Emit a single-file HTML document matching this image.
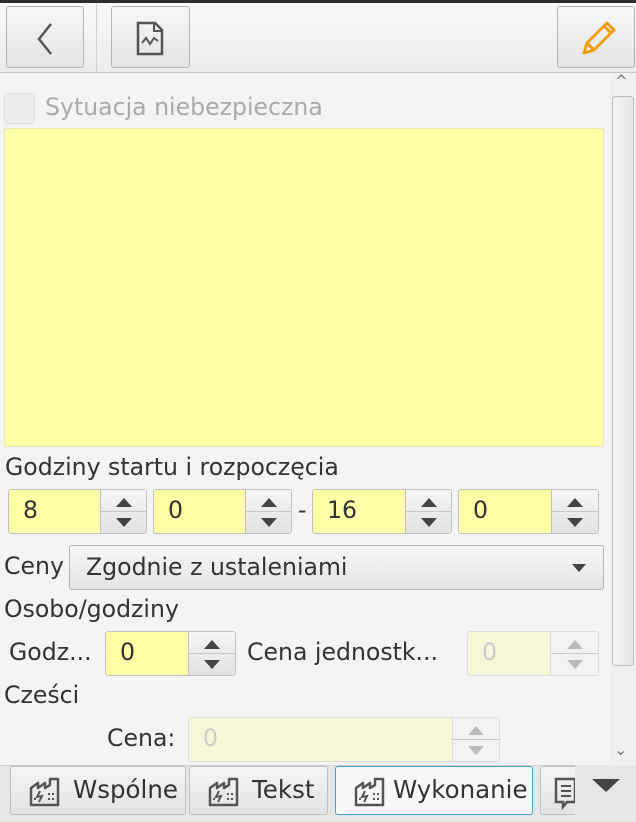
<!DOCTYPE html>
<html><head><meta charset="utf-8"><style>
*{box-sizing:border-box;margin:0;padding:0}
body{width:636px;height:822px;overflow:hidden;background:#f4f4f4;font-family:"DejaVu Sans","Liberation Sans",sans-serif;font-size:23.6px;color:#333;position:relative}
.a{position:absolute}
.btn{position:absolute;border:1px solid #b5b5b5;border-radius:3px;background:linear-gradient(#f7f7f7,#e4e4e4)}
.txt{position:absolute;white-space:nowrap;line-height:1}
.spin{position:absolute;height:45px;border:1px solid #c2c2c2;border-radius:3px;background:#ffffa8;overflow:hidden}
.spin .b{position:absolute;right:0;top:0;bottom:0;background:linear-gradient(#f6f6f6,#e2e2e2);border-left:1px solid #c2c2c2}
.spin .b:after{content:"";position:absolute;left:0;right:0;top:21px;border-top:1px solid #c8c8c8}
.up,.dn{position:absolute;left:50%;margin-left:-8px;width:0;height:0;border-left:8px solid transparent;border-right:8px solid transparent}
.up{top:8px;border-bottom:9px solid #444}
.dn{top:28px;border-top:9px solid #444}
.spin .v{position:absolute;left:14px;top:9px;line-height:1}
.dis{background:#f7f7d8;border-color:#ddd}
.dis .b{background:#f2f2f2;border-color:#ddd}
.dis .up{border-bottom-color:#bbb}.dis .dn{border-top-color:#bbb}
.dis .v{color:#ccc}
.tab{position:absolute;top:766px;height:49px;border:1px solid #c0c0c0;border-radius:3px;background:linear-gradient(#f5f5f5,#e3e3e3)}
.tab .t{position:absolute;left:62px;top:11px;font-size:24.5px;line-height:1}
.tab svg{position:absolute;left:17px;top:9px}
</style></head><body>
<div class="a" style="left:0;top:0;width:636px;height:3px;background:#2d2d2d"></div>
<div class="a" style="left:0;top:3px;width:636px;height:70px;background:linear-gradient(#f8f8f8,#ececec);border-bottom:1px solid #c8c8c8"></div>
<div class="a" style="left:96px;top:3px;width:1px;height:70px;background:#d0d0d0"></div>
<div class="btn" style="left:6px;top:6px;width:78px;height:62px"><svg class="a" style="left:24px;top:14px" width="30" height="36"><path d="M20 3 L8 18 L20 33" fill="none" stroke="#555" stroke-width="2.5"/></svg></div>
<div class="btn" style="left:111px;top:6px;width:79px;height:62px"><svg class="a" style="left:23px;top:14px" width="36" height="36"><path d="M3 2 H20 L27 9 V33 H3 Z" fill="none" stroke="#555" stroke-width="2.5"/><path d="M19 2 V10 H27" fill="none" stroke="#555" stroke-width="2"/><path d="M7 22 L11 17 L15 23 L19 17 L23 20" fill="none" stroke="#555" stroke-width="2"/></svg></div>
<div class="btn" style="left:557px;top:6px;width:78px;height:62px"><svg class="a" style="left:20px;top:12px" width="40" height="40"><path d="M6 34 L9 24 L29 4 L36 11 L16 31 Z M9 24 L16 31 M26 7 L33 14" fill="none" stroke="#f39c12" stroke-width="3" stroke-linejoin="round"/></svg></div>

<div class="a" style="left:610px;top:74px;width:26px;height:692px;background:#f0f0f0"></div>
<div class="txt" style="left:615px;top:74px;font-size:15px;color:#777">^</div>
<div class="a" style="left:612px;top:96px;width:22px;height:570px;border:1px solid #bbb;border-radius:4px;background:linear-gradient(90deg,#f4f4f4,#e6e6e6)"></div>
<div class="txt" style="left:614px;top:742px;font-size:16px;color:#777">&#8964;</div>

<div class="a" style="left:4px;top:93px;width:31px;height:31px;border:1px solid #ddd;border-radius:3px;background:#ececec"></div>
<div class="txt" style="left:45px;top:96px;color:#aaa">Sytuacja niebezpieczna</div>
<div class="a" style="left:4px;top:128px;width:600px;height:319px;background:#ffffa8;border:1px solid #e8e8c0"></div>

<div class="txt" style="left:5px;top:456px">Godziny startu i rozpoczęcia</div>
<div class="spin" style="left:8px;top:489px;width:139px"><span class="v">8</span><div class="b" style="width:46px"><i class="up"></i><i class="dn"></i></div></div>
<div class="spin" style="left:153px;top:489px;width:139px"><span class="v">0</span><div class="b" style="width:46px"><i class="up"></i><i class="dn"></i></div></div>
<div class="txt" style="left:298px;top:499px">-</div>
<div class="spin" style="left:312px;top:489px;width:140px"><span class="v">16</span><div class="b" style="width:46px"><i class="up"></i><i class="dn"></i></div></div>
<div class="spin" style="left:458px;top:489px;width:141px"><span class="v">0</span><div class="b" style="width:47px"><i class="up"></i><i class="dn"></i></div></div>

<div class="txt" style="left:4px;top:555px">Ceny</div>
<div class="btn" style="left:69px;top:545px;width:535px;height:45px"><span class="txt" style="left:16px;top:10px">Zgodnie z ustaleniami</span><i class="a" style="left:502px;top:18px;border-left:7px solid transparent;border-right:7px solid transparent;border-top:8px solid #444"></i></div>

<div class="txt" style="left:4px;top:598px">Osobo/godziny</div>
<div class="txt" style="left:9px;top:641px">Godz...</div>
<div class="spin" style="left:105px;top:631px;width:131px"><span class="v">0</span><div class="b" style="width:47px"><i class="up"></i><i class="dn"></i></div></div>
<div class="txt" style="left:247px;top:641px">Cena jednostk...</div>
<div class="spin dis" style="left:467px;top:631px;width:132px"><span class="v">0</span><div class="b" style="width:48px"><i class="up"></i><i class="dn"></i></div></div>

<div class="txt" style="left:4px;top:684px">Cześci</div>
<div class="txt" style="left:107px;top:727px">Cena:</div>
<div class="spin dis" style="left:188px;top:717px;width:312px"><span class="v">0</span><div class="b" style="width:47px"><i class="up"></i><i class="dn"></i></div></div>

<div class="a" style="left:0;top:765px;width:636px;height:57px;background:#e6e6e6;border-top:1px solid #cfcfcf"></div>
<svg width="0" height="0" style="position:absolute"><defs><g id="f"><path d="M3 29 V12 L10 7 V12 L17 7 V12 L22 9 V3 H30 V29 Z" fill="none" stroke="#555" stroke-width="2.5" stroke-linejoin="round"/><path d="M12 15 L9 21 L14 20 L11 26" fill="none" stroke="#555" stroke-width="2"/><rect x="6" y="22" width="2" height="2" fill="#555"/><rect x="20" y="17" width="2" height="2" fill="#555"/><rect x="24" y="17" width="2" height="2" fill="#555"/><rect x="20" y="22" width="2" height="2" fill="#555"/><rect x="24" y="22" width="2" height="2" fill="#555"/></g></defs></svg>
<div class="tab" style="left:10px;width:176px"><svg width="34" height="32"><use href="#f"/></svg><span class="t">Wspólne</span></div>
<div class="tab" style="left:189px;width:139px"><svg width="34" height="32"><use href="#f"/></svg><span class="t">Tekst</span></div>
<div class="tab" style="left:335px;width:198px;background:#f8f8f8;border-color:#4aa3d8"><svg width="34" height="32"><use href="#f"/></svg><span class="t" style="left:57px">Wykonanie</span></div>
<div class="tab" style="left:540px;width:60px;border-right:none"><svg width="34" height="34" style="left:12px"><path d="M3 3 H22 V26 H14 L10 31 V26 H3 Z" fill="none" stroke="#555" stroke-width="2.5"/><path d="M8 10 H18 M8 15 H18 M8 20 H18" stroke="#555" stroke-width="2"/></svg></div>
<div class="a" style="left:575px;top:765px;width:61px;height:57px;background:#e6e6e6"></div>
<i class="a" style="left:592px;top:779px;border-left:14px solid transparent;border-right:14px solid transparent;border-top:13px solid #444"></i>
</body></html>
